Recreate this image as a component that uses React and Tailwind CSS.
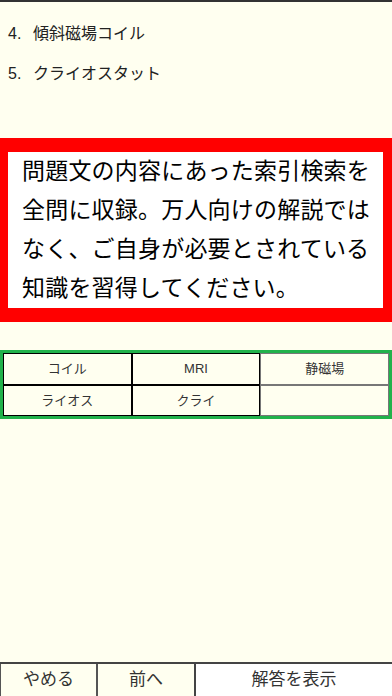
import React from "react";

const items = [
  { no: "4.", label: "傾斜磁場コイル" },
  { no: "5.", label: "クライオスタット" },
];

const keywords = [
  { text: "コイル", dark: true },
  { text: "MRI", dark: true },
  { text: "静磁場", dark: false },
  { text: "ライオス", dark: true },
  { text: "クライ", dark: true },
  { text: "", dark: false },
];

function App() {
  return (
    <div
      className="h-screen flex flex-col bg-[#fffff0] border-t-2 border-[#333] text-[#222] overflow-hidden"
      style={{ fontFamily: '"Liberation Sans", "Noto Sans CJK JP", sans-serif' }}
    >
      {/* choices */}
      <div className="pt-[12px]">
        {items.map((it) => (
          <div key={it.no} className="flex items-center h-[40px] text-[16px] pl-[8px]">
            <span className="w-[25px]">{it.no}</span>
            <span>{it.label}</span>
          </div>
        ))}
      </div>

      {/* notice */}
      <div className="mt-[44px] bg-[#ff0000] pt-[14px] pb-[14px] pl-[8px] pr-[9px]">
        <div className="bg-white pl-[14px] pr-[10px] text-[23px] leading-[39px] text-black tracking-[0.2px]">
          問題文の内容にあった索引検索を全問に収録。万人向けの解説ではなく、ご自身が必要とされている知識を習得してください。
        </div>
      </div>

      {/* keyword table */}
      <div className="mt-[28px] border-[3px] border-[#21b24b] grid grid-cols-3">
        {keywords.map((k, i) => (
          <div
            key={i}
            className={
              "flex items-center justify-center h-[31.5px] text-[13px] text-[#333] border " +
              (k.dark ? "border-black" : "border-[#777]")
            }
          >
            {k.text}
          </div>
        ))}
      </div>

      {/* bottom buttons */}
      <div className="mt-auto flex h-[34px] border-t-2 border-[#444] text-[17px] text-[#333]">
        <button className="w-[98px] border-l border-r-2 border-[#555] bg-[#fffff0]">やめる</button>
        <button className="w-[98px] border-r-2 border-[#444] bg-[#fffff0]">前へ</button>
        <button className="flex-1 bg-white">解答を表示</button>
      </div>
    </div>
  );
}

export default App;
